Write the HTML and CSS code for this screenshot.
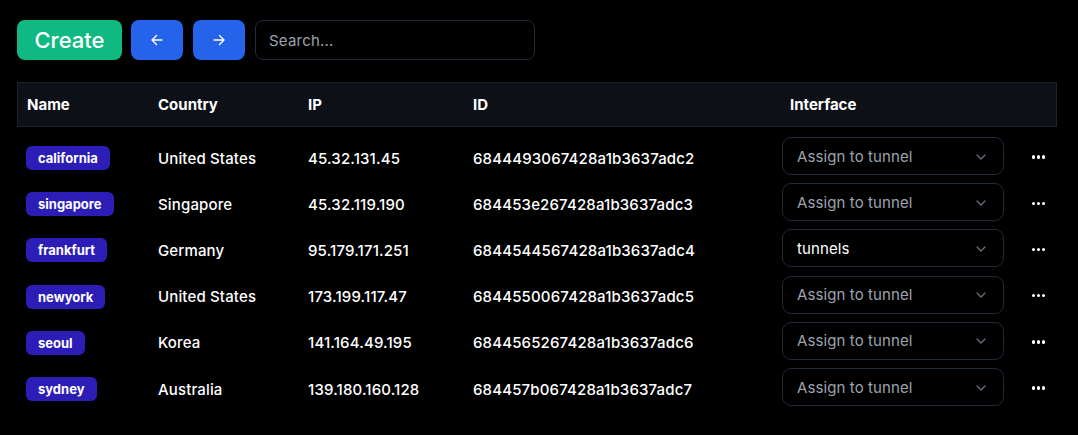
FILE: index.html
```html
<!DOCTYPE html>
<html>
<head>
<meta charset="utf-8">
<link rel="stylesheet" href="styles.css">
</head>
<body>
<div class="page">
  <div class="toolbar">
    <button class="btn btn-create">Create</button>
    <button class="btn btn-nav" aria-label="Previous">
      <svg width="14" height="14" viewBox="0 0 14 14" fill="none" stroke="#fff" stroke-width="1.4" stroke-linecap="round" stroke-linejoin="round"><path d="M12 7H2M6.5 2.5L2 7l4.5 4.5"/></svg>
    </button>
    <button class="btn btn-nav" aria-label="Next">
      <svg width="14" height="14" viewBox="0 0 14 14" fill="none" stroke="#fff" stroke-width="1.4" stroke-linecap="round" stroke-linejoin="round"><path d="M2 7h10M7.5 2.5L12 7l-4.5 4.5"/></svg>
    </button>
    <input class="search" type="text" placeholder="Search...">
  </div>

  <div class="grid head">
    <div class="cell">Name</div>
    <div class="cell">Country</div>
    <div class="cell">IP</div>
    <div class="cell">ID</div>
    <div class="cell">Interface</div>
    <div class="cell"></div>
  </div>

  <div class="rows">
    <div class="grid row">
      <div class="cell"><span class="badge">california</span></div>
      <div class="cell">United States</div>
      <div class="cell">45.32.131.45</div>
      <div class="cell">6844493067428a1b3637adc2</div>
      <div class="cell sel-cell"><div class="select placeholder">Assign to tunnel<svg class="chev" width="10" height="6" viewBox="0 0 10 6" fill="none" stroke="#6b7280" stroke-width="1.2" stroke-linecap="round" stroke-linejoin="round"><path d="M1 1l4 4 4-4"/></svg></div></div>
      <div class="cell act"><span class="dots"><i></i><i></i><i></i></span></div>
    </div>
    <div class="grid row">
      <div class="cell"><span class="badge">singapore</span></div>
      <div class="cell">Singapore</div>
      <div class="cell">45.32.119.190</div>
      <div class="cell">684453e267428a1b3637adc3</div>
      <div class="cell sel-cell"><div class="select placeholder">Assign to tunnel<svg class="chev" width="10" height="6" viewBox="0 0 10 6" fill="none" stroke="#6b7280" stroke-width="1.2" stroke-linecap="round" stroke-linejoin="round"><path d="M1 1l4 4 4-4"/></svg></div></div>
      <div class="cell act"><span class="dots"><i></i><i></i><i></i></span></div>
    </div>
    <div class="grid row">
      <div class="cell"><span class="badge">frankfurt</span></div>
      <div class="cell">Germany</div>
      <div class="cell">95.179.171.251</div>
      <div class="cell">6844544567428a1b3637adc4</div>
      <div class="cell sel-cell"><div class="select">tunnels<svg class="chev" width="10" height="6" viewBox="0 0 10 6" fill="none" stroke="#6b7280" stroke-width="1.2" stroke-linecap="round" stroke-linejoin="round"><path d="M1 1l4 4 4-4"/></svg></div></div>
      <div class="cell act"><span class="dots"><i></i><i></i><i></i></span></div>
    </div>
    <div class="grid row">
      <div class="cell"><span class="badge">newyork</span></div>
      <div class="cell">United States</div>
      <div class="cell">173.199.117.47</div>
      <div class="cell">6844550067428a1b3637adc5</div>
      <div class="cell sel-cell"><div class="select placeholder">Assign to tunnel<svg class="chev" width="10" height="6" viewBox="0 0 10 6" fill="none" stroke="#6b7280" stroke-width="1.2" stroke-linecap="round" stroke-linejoin="round"><path d="M1 1l4 4 4-4"/></svg></div></div>
      <div class="cell act"><span class="dots"><i></i><i></i><i></i></span></div>
    </div>
    <div class="grid row">
      <div class="cell"><span class="badge">seoul</span></div>
      <div class="cell">Korea</div>
      <div class="cell">141.164.49.195</div>
      <div class="cell">6844565267428a1b3637adc6</div>
      <div class="cell sel-cell"><div class="select placeholder">Assign to tunnel<svg class="chev" width="10" height="6" viewBox="0 0 10 6" fill="none" stroke="#6b7280" stroke-width="1.2" stroke-linecap="round" stroke-linejoin="round"><path d="M1 1l4 4 4-4"/></svg></div></div>
      <div class="cell act"><span class="dots"><i></i><i></i><i></i></span></div>
    </div>
    <div class="grid row">
      <div class="cell"><span class="badge">sydney</span></div>
      <div class="cell">Australia</div>
      <div class="cell">139.180.160.128</div>
      <div class="cell">684457b067428a1b3637adc7</div>
      <div class="cell sel-cell"><div class="select placeholder">Assign to tunnel<svg class="chev" width="10" height="6" viewBox="0 0 10 6" fill="none" stroke="#6b7280" stroke-width="1.2" stroke-linecap="round" stroke-linejoin="round"><path d="M1 1l4 4 4-4"/></svg></div></div>
      <div class="cell act"><span class="dots"><i></i><i></i><i></i></span></div>
    </div>
  </div>
</div>
</body>
</html>
```

FILE: styles.css
```css
* { box-sizing: border-box; }
html, body {
  margin: 0;
  background: #000;
  color: #fff;
  font-family: Inter, "Noto Sans", sans-serif;
}
.page {
  padding: 20px 21px 0 17px;
}
.toolbar {
  display: flex;
  gap: 10px;
  height: 40px;
  align-items: stretch;
}
.btn {
  border: 0;
  border-radius: 8px;
  color: #fff;
  font-family: inherit;
  cursor: pointer;
  display: flex;
  align-items: center;
  justify-content: center;
  padding: 0;
}
.btn-create {
  background: #10b981;
  width: 105px;
  margin-right: -1px;
  font-size: 22px;
  font-weight: 500;
}
.btn-nav {
  background: #2563eb;
  width: 52px;
}
.search {
  width: 280px;
  background: #000;
  border: 1px solid #1f2937;
  border-radius: 8px;
  color: #fff;
  font-family: inherit;
  font-size: 15px;
  letter-spacing: 0.2px;
  padding: 0 13px;
  outline: none;
}
.search::placeholder { color: #9ca3af; }

.grid {
  display: grid;
  grid-template-columns: 131px 150px 165px 317px 240px 37px;
  align-items: center;
}
.head {
  margin-top: 22px;
  height: 45px;
  background: #0d1017;
  border: 1px solid #1e222b;
  font-weight: 700;
  font-size: 15px;
}
.head .cell { padding-left: 9px; }
.rows {
  padding-top: 6px;
}
.row {
  height: 46.2px;
  font-size: 15px;
  font-weight: 500;
  letter-spacing: 0.15px;
}
.row .cell { padding-left: 10px; padding-top: 4px; white-space: nowrap; }
.row .cell:first-child { padding-left: 9px; }
.badge {
  display: inline-block;
  background: #2c1db6;
  color: #fff;
  font-size: 13px;
  font-weight: 700;
  letter-spacing: 0;
  line-height: 24px;
  height: 24px;
  padding: 0 12px;
  border-radius: 6px;
}
.row .sel-cell { padding-left: 2px; padding-top: 0; }
.select {
  width: 222px;
  height: 38px;
  border: 1px solid #1f2937;
  border-radius: 9px;
  background: #000;
  display: flex;
  align-items: center;
  justify-content: space-between;
  padding: 0 17px 0 14px;
  font-size: 15px;
  font-weight: 400;
  letter-spacing: 0.1px;
  color: #fff;
}
.select.placeholder { color: #9ca3af; }
.chev { flex: none; margin-top: 1px; }
.row .act { padding-left: 0; padding-top: 2px; display: flex; justify-content: center; }
.dots {
  display: flex;
  gap: 1.5px;
}
.dots i {
  width: 3.5px;
  height: 3.5px;
  border-radius: 50%;
  background: #fff;
}
```
